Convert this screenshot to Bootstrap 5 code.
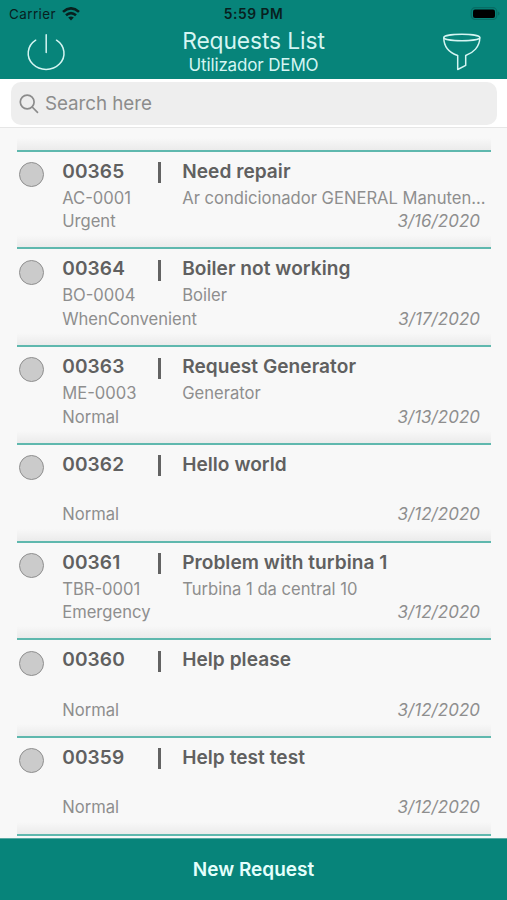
<!DOCTYPE html>
<html lang="en">
<head>
<meta charset="utf-8">
<meta name="viewport" content="width=device-width, initial-scale=1">
<title>Requests List</title>
<link href="https://cdn.jsdelivr.net/npm/bootstrap@5.3.0/dist/css/bootstrap.min.css" rel="stylesheet">
<style>
body{font-family:Inter,"Liberation Sans",sans-serif;background:#f8f8f8;height:900px}
.top-area{background:#07847a;height:79px;color:#d5f5f2}
.status-bar{height:26px;color:#08201e;font-size:13.4px;line-height:26px;padding:1px 7px 0 9px}
.status-bar>*{flex:1 1 0}
.carrier{letter-spacing:.45px}
.signal{margin-left:6px}
.clock{font-weight:600;font-size:13.8px;letter-spacing:.55px;padding-right:2px}
.title-bar{height:53px;padding:0 26px}
.title-main{font-size:22.8px;line-height:29px;letter-spacing:-.1px}
.title-sub{font-size:17px;line-height:21px;letter-spacing:-.15px}
.search-area{height:49px;padding:3px 10px 2px 11px;border-bottom:1.5px solid #e6e6e6}
.search-box{background:#eee;border-radius:10px;height:43px;color:#8c8c8c;font-size:18.8px;padding-left:8px;letter-spacing:-.05px}
.search-text{margin-left:6px;padding-top:2px}
.requests{padding:0 16px 0 17px}
.first-line{height:23.8px}
.rule{border-bottom:2px solid #5fb8ae;background:linear-gradient(to top,#ebebeb,#f8f8f800 12px)}
.request{height:97.7px;color:#8e8e8e;font-size:16.6px}
.dot-col{width:45.2px;padding:10.3px 0 0 2px}
.dot{width:25px;height:25px;border-radius:50%;background:#cbcbcb;border:1.3px solid #8f8f8f}
.code-col{width:95px;padding-top:6px}
.bar-col{width:25px;padding-top:10.5px}
.bar{width:3px;height:21px;background:#636363;margin-left:.8px}
.text-col{padding-top:6px;min-width:0}
.head{font-size:19.1px;line-height:27px;font-weight:600;color:#606060;height:29px}
.text-col .head{letter-spacing:.04px}
.code{letter-spacing:.1px}
.line{line-height:23.5px;height:23.5px;white-space:nowrap}
.date{font-style:italic;padding-right:11px;font-size:16.9px;letter-spacing:.08px}
.new-request{background:#07847a;border-top:1px solid #58aaa3;height:62px;padding-top:2px;color:#e4fffc;font-size:19px;font-weight:600}
</style>
<script src="https://cdn.jsdelivr.net/npm/bootstrap@5.3.0/dist/js/bootstrap.bundle.min.js"></script>
</head>
<body class="d-flex flex-column overflow-hidden">
<header class="top-area flex-shrink-0">
  <div class="status-bar d-flex align-items-center">
    <div class="d-flex align-items-center"><span class="carrier">Carrier</span>
      <svg class="signal" width="18" height="14" viewBox="0 0 18 14" fill="none" stroke="#08201e" stroke-width="2.6"><path d="M1 4.9Q9-2.2 17 4.9M4 8.3Q9 4 14 8.3"/><path d="M9 13.4 6.2 10.6Q9 8.4 11.8 10.6Z" fill="#08201e" stroke="none"/></svg>
    </div>
    <div class="clock text-center">5:59 PM</div>
    <div class="d-flex justify-content-end">
      <svg width="30" height="14" viewBox="0 0 30 14"><rect x="1.2" y=".7" width="25.6" height="11.8" rx="4" fill="none" stroke="#076d65" stroke-width="1.2"/><rect x="3" y="2.4" width="22" height="8.5" rx="2" fill="#000"/><path d="M28 4.6v4q1.6-.6 1.6-2t-1.6-2" fill="#076d65"/></svg>
    </div>
  </div>
  <div class="title-bar d-flex justify-content-between">
    <svg class="mt-1" width="40" height="44" viewBox="0 0 40 44" fill="none" stroke="#d5f5f2" stroke-width="1.5" stroke-linecap="round"><path d="M20.2 4.8V22.5M9.7 10.2A17.9 16.1 0 1 0 30.5 10.2"/></svg>
    <div class="text-center"><div class="title-main">Requests List</div><div class="title-sub">Utilizador DEMO</div></div>
    <svg class="mt-1" width="40" height="44" viewBox="0 0 40 44" fill="none" stroke="#d5f5f2" stroke-width="1.5" stroke-linejoin="round"><ellipse cx="20.8" cy="7.5" rx="18" ry="3.3"/><path d="M2.8 7.5C2.8 17 9 23 16.7 25.5V39.5L24.7 35.3V25.5C32 23 38.8 17 38.8 7.5"/></svg>
  </div>
</header>
<div class="search-area bg-white flex-shrink-0">
  <div class="search-box d-flex align-items-center">
    <svg width="20" height="20" viewBox="0 0 20 20" fill="none" stroke="#8c8c8c" stroke-width="1.7" stroke-linecap="round"><circle cx="8.2" cy="8" r="6.9"/><path d="M13.2 13 18.5 18.3"/></svg>
    <span class="search-text">Search here</span>
  </div>
</div>
<main class="requests flex-grow-1 overflow-hidden" id="requests">
  <div class="first-line rule"></div>
</main>
<footer class="new-request d-flex align-items-center justify-content-center flex-shrink-0">New Request</footer>
<script>
const items = [
  ["00365","AC-0001","Urgent","Need repair","Ar condicionador GENERAL Manuten...","3/16/2020"],
  ["00364","BO-0004","WhenConvenient","Boiler not working","Boiler","3/17/2020"],
  ["00363","ME-0003","Normal","Request Generator","Generator","3/13/2020"],
  ["00362","","Normal","Hello world","","3/12/2020"],
  ["00361","TBR-0001","Emergency","Problem with turbina 1","Turbina 1 da central 10","3/12/2020"],
  ["00360","","Normal","Help please","","3/12/2020"],
  ["00359","","Normal","Help test test","","3/12/2020"]
];
document.getElementById("requests").insertAdjacentHTML("beforeend", items.map(r => `
  <article class="request rule d-flex">
    <div class="dot-col flex-shrink-0"><div class="dot"></div></div>
    <div class="code-col flex-shrink-0"><div class="head code">${r[0]}</div><div class="line">${r[1]}</div><div class="line">${r[2]}</div></div>
    <div class="bar-col flex-shrink-0"><div class="bar"></div></div>
    <div class="text-col flex-grow-1"><div class="head">${r[3]}</div><div class="line">${r[4]}</div><div class="line date text-end">${r[5]}</div></div>
  </article>`).join(""));
</script>
</body>
</html>
